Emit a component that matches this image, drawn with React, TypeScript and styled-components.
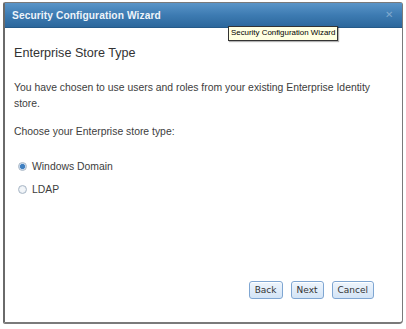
import React, { useState } from 'react';
import styled, { createGlobalStyle } from 'styled-components';

const GlobalStyle = createGlobalStyle`
  html, body {
    margin: 0;
    padding: 0;
    background: #ffffff;
  }
  body {
    font-family: "Liberation Sans", Arial, sans-serif;
  }
`;

const Page = styled.div`
  position: relative;
  width: 406px;
  height: 329px;
  padding: 2px 0 0 3px;
  box-sizing: border-box;
`;

const Window = styled.div`
  width: 400px;
  height: 322px;
  box-sizing: border-box;
  border: 1px solid #7a7a7a;
  border-left: 2px solid #6a6a6a;
  border-bottom: 2px solid #7a7a7a;
  border-radius: 2px 3px 4px 2px;
  display: flex;
  flex-direction: column;
  background: #ffffff;
`;

const TitleBar = styled.div`
  height: 24px;
  flex: none;
  display: flex;
  align-items: center;
  justify-content: space-between;
  padding: 0 9px 0 7px;
  background: linear-gradient(#5a95c8, #3d7bb2 50%, #2c679c);
  border-bottom: 1px solid #255a89;
`;

const Title = styled.span`
  color: #eef4fa;
  font-size: 10.2px;
  font-weight: bold;
  letter-spacing: 0.1px;
`;

const Close = styled.span`
  color: rgba(255, 255, 255, 0.35);
  font-size: 10px;
  line-height: 1;
`;

const Tooltip = styled.div`
  position: absolute;
  left: 228px;
  top: 26px;
  padding: 0 2px;
  height: 13px;
  line-height: 12px;
  font-size: 7.9px;
  color: #000;
  background: #ffffe1;
  border: 1px solid #333;
  box-shadow: 1px 1px 1px rgba(0, 0, 0, 0.3);
  white-space: nowrap;
`;

const Body = styled.div`
  flex: 1;
  display: flex;
  flex-direction: column;
  padding: 18px 10px 23px 9px;
  color: #3d3d3d;
`;

const Heading = styled.h2`
  margin: 0 0 20px;
  font-size: 12.6px;
  font-weight: normal;
  color: #333;
`;

const Text = styled.p`
  margin: 0 0 12px;
  font-size: 10.4px;
  line-height: 16px;
`;

const Options = styled.div`
  display: flex;
  flex-direction: column;
  gap: 7px;
  margin-top: 6px;
  padding-left: 4px;
`;

const Option = styled.label`
  display: flex;
  align-items: center;
  gap: 5px;
  font-size: 10.4px;
  height: 16px;
`;

const Dot = styled.span<{ $on: boolean }>`
  width: 9px;
  height: 9px;
  border-radius: 50%;
  box-sizing: border-box;
  border: 1px solid #a9b7c6;
  background: ${p =>
    p.$on
      ? 'radial-gradient(circle, #3f7fc0 0 2.2px, #b9d0ea 2.8px, #eef3f9 4px)'
      : 'radial-gradient(circle, #f3f6f9 0 2px, #dfe6ee 4px)'};
`;

const Footer = styled.div`
  margin-top: auto;
  display: flex;
  justify-content: flex-end;
  gap: 8px;
  padding-right: 18px;
`;

const Button = styled.button`
  height: 18px;
  padding: 0 5px;
  font-family: "DejaVu Sans", sans-serif;
  font-size: 9px;
  color: #333;
  border: 1px solid #7fa6d2;
  border-radius: 3px;
  background: linear-gradient(#eef5fd, #d3e4f6);
  box-shadow: inset 0 1px 0 #fff;
`;

export default function App() {
  const [store, setStore] = useState('windows');
  return (
    <Page>
      <GlobalStyle />
      <Window>
        <TitleBar>
          <Title>Security Configuration Wizard</Title>
          <Close>✕</Close>
        </TitleBar>
        <Body>
          <Heading>Enterprise Store Type</Heading>
          <Text>
            You have chosen to use users and roles from your existing Enterprise Identity store.
          </Text>
          <Text>Choose your Enterprise store type:</Text>
          <Options>
            <Option onClick={() => setStore('windows')}>
              <Dot $on={store === 'windows'} />
              Windows Domain
            </Option>
            <Option onClick={() => setStore('ldap')}>
              <Dot $on={store === 'ldap'} />
              LDAP
            </Option>
          </Options>
          <Footer>
            <Button>Back</Button>
            <Button>Next</Button>
            <Button>Cancel</Button>
          </Footer>
        </Body>
      </Window>
      <Tooltip>Security Configuration Wizard</Tooltip>
    </Page>
  );
}
